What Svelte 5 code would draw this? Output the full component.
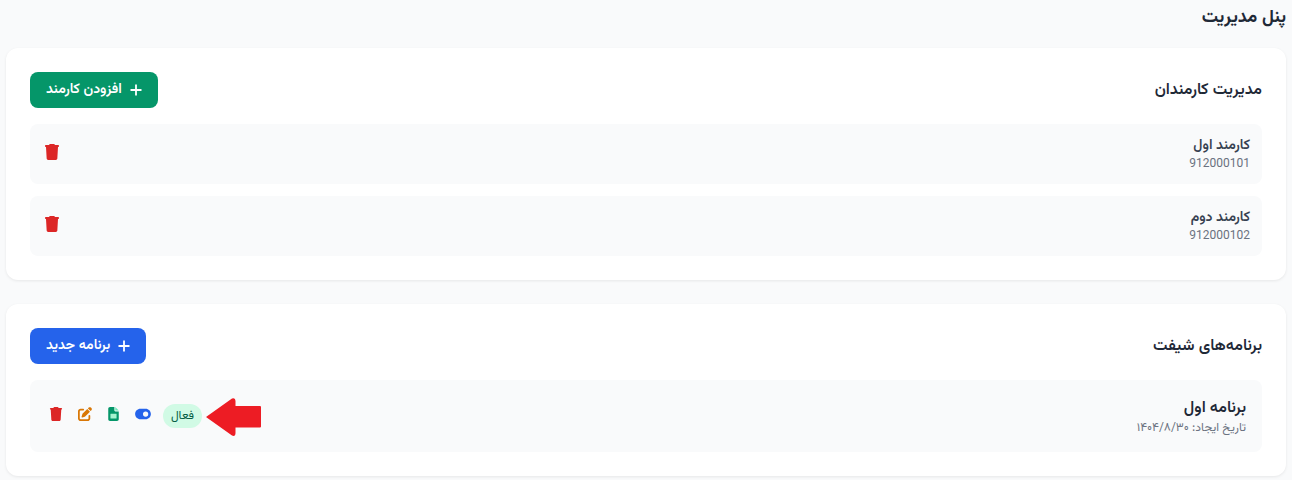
<script>
  const employees = [
    { name: "کارمند اول", phone: "912000101" },
    { name: "کارمند دوم", phone: "912000102" }
  ];
</script>

{#snippet trash(size)}
  <svg class="icon red" viewBox="0 0 448 512" width={size} height={size}><path d="M135.2 17.7L128 32H32C14.3 32 0 46.3 0 64S14.3 96 32 96H416c17.7 0 32-14.3 32-32s-14.3-32-32-32H320l-7.2-14.3C307.4 6.8 296.3 0 284.2 0H163.8c-12.1 0-23.2 6.8-28.6 17.7zM416 96H32L53.2 467c1.6 25.3 22.6 45 47.9 45H346.9c25.3 0 46.3-19.7 47.9-45L416 96z"/></svg>
{/snippet}

{#snippet plus()}
  <svg class="plus" viewBox="0 0 12 12" width="12" height="12"><path d="M6 .5v11M.5 6h11"/></svg>
{/snippet}

<div class="page" dir="rtl">
  <h1>پنل مدیریت</h1>

  <section class="card">
    <header>
      <h2>مدیریت کارمندان</h2>
      <button class="btn green">{@render plus()}<span>افزودن کارمند</span></button>
    </header>
    <div class="rows">
      {#each employees as emp}
        <div class="row">
          <div>
            <div class="name">{emp.name}</div>
            <div class="phone">{emp.phone}</div>
          </div>
          <button class="iconbtn">{@render trash(16)}</button>
        </div>
      {/each}
    </div>
  </section>

  <section class="card">
    <header>
      <h2>برنامه‌های شیفت</h2>
      <button class="btn blue">{@render plus()}<span>برنامه جدید</span></button>
    </header>
    <div class="plan">
      <div>
        <div class="plan-name">برنامه اول</div>
        <div class="plan-date">تاریخ ایجاد: ۱۴۰۴/۸/۳۰</div>
      </div>
      <div class="actions">
        <span class="badge">فعال</span>
        <svg class="icon blue-i" viewBox="0 0 576 512" width="16" height="14"><path d="M192 64C86 64 0 150 0 256S86 448 192 448H384c106 0 192-86 192-192s-86-192-192-192H192zm192 96a96 96 0 1 1 0 192 96 96 0 1 1 0-192z"/></svg>
        <svg class="icon green-i" viewBox="0 0 384 512" width="13" height="14">
          <path d="M64 0C28.7 0 0 28.7 0 64V448c0 35.3 28.7 64 64 64H320c35.3 0 64-28.7 64-64V160H256c-17.7 0-32-14.3-32-32V0H64z"/>
          <path class="fold" d="M256 0V128H384L256 0z"/>
          <rect class="sheet" x="80" y="248" width="224" height="176" rx="12"/>
        </svg>
        <svg class="icon orange" viewBox="0 0 512 512" width="14" height="14"><path d="M471.6 21.7c-21.9-21.9-57.3-21.9-79.2 0L362.3 51.7l97.9 97.9 30.1-30.1c21.9-21.9 21.9-57.3 0-79.2L471.6 21.7zm-299.2 220c-6.1 6.1-10.8 13.6-13.5 21.9l-29.6 88.8c-2.9 8.6-.6 18.1 5.8 24.6s15.9 8.7 24.6 5.8l88.8-29.6c8.2-2.7 15.7-7.4 21.9-13.5L437.7 172.3 339.7 74.3 172.4 241.7zM96 64C43 64 0 107 0 160V416c0 53 43 96 96 96H352c53 0 96-43 96-96V320c0-17.7-14.3-32-32-32s-32 14.3-32 32v96c0 17.7-14.3 32-32 32H96c-17.7 0-32-14.3-32-32V160c0-17.7 14.3-32 32-32h96c17.7 0 32-14.3 32-32s-14.3-32-32-32H96z"/></svg>
        {@render trash(14)}
      </div>
    </div>
  </section>

  <svg class="arrow" viewBox="0 0 55 39" width="55" height="39"><path d="M0 19 26 .6Q29.5-.6 29.5 3V8H54Q55 8 55 9V28.5Q55 29.5 54 29.5H29.5V35Q29.5 38.8 26 37.6Z"/></svg>
</div>

<style>
  :global(body) {
    background: #f9fafb;
    overflow: hidden;
  }
  .page {
    position: relative;
    height: 480px;
    box-sizing: border-box;
    padding: 4px 6px 0;
    font-family: Vazirmatn, "Noto Sans Arabic", Roboto, "DejaVu Sans", sans-serif;
    color: #1f2937;
  }
  h1 {
    margin: 0 0 16px;
    font-size: 18px;
    line-height: 28px;
    font-weight: 700;
  }
  h2 {
    margin: 0;
    padding-top: 2px;
    font-size: 16px;
    line-height: 24px;
    font-weight: 600;
  }
  .card {
    background: #fff;
    border-radius: 12px;
    padding: 24px;
    margin-bottom: 24px;
    box-shadow: 0 1px 3px rgba(0, 0, 0, .08);
  }
  header {
    display: flex;
    justify-content: space-between;
    align-items: center;
    margin-bottom: 16px;
  }
  .btn {
    display: flex;
    align-items: center;
    gap: 8px;
    height: 36px;
    padding: 0 16px;
    border: 0;
    border-radius: 8px;
    color: #fff;
    font: 600 14px Vazirmatn, "Noto Sans Arabic", Roboto, sans-serif;
  }
  .green { background: #059669; }
  .blue { background: #2563eb; }
  .plus {
    fill: none;
    stroke: #fff;
    stroke-width: 1.8;
  }
  .rows {
    display: flex;
    flex-direction: column;
    gap: 12px;
  }
  .row, .plan {
    display: flex;
    justify-content: space-between;
    align-items: center;
    background: #f9fafb;
    border-radius: 8px;
  }
  .row {
    height: 60px;
    padding: 0 12px;
  }
  .plan {
    height: 72px;
    padding: 0 16px;
  }
  .name {
    font-size: 14px;
    line-height: 20px;
    font-weight: 600;
    color: #374151;
  }
  .phone {
    font-size: 12px;
    line-height: 16px;
    color: #6b7280;
    text-align: right;
  }
  .iconbtn {
    display: flex;
    padding: 0 2px;
    background: none;
    border: 0;
  }
  .plan-name {
    padding-top: 1px;
    margin-bottom: -1px;
    font-size: 16px;
    line-height: 24px;
    font-weight: 600;
  }
  .plan-date {
    font-size: 12px;
    line-height: 16px;
    color: #6b7280;
  }
  .actions {
    display: flex;
    align-items: center;
    gap: 15px;
    padding-left: 3px;
  }
  .icon {
    display: block;
    margin-bottom: 4px;
  }
  .red { fill: #dc2626; }
  .orange { fill: #d97706; }
  .green-i { fill: #059669; }
  .blue-i { fill: #2563eb; }
  .fold { fill: #6ee7b7; }
  .sheet { fill: #a7f3d0; }
  .badge {
    width: 39px;
    height: 24px;
    margin-left: -3px;
    border-radius: 12px;
    background: #d1fae5;
    color: #065f46;
    font-size: 12px;
    line-height: 24px;
    text-align: center;
  }
  .arrow {
    position: absolute;
    left: 206px;
    top: 398px;
    fill: #ed1c24;
  }
</style>
